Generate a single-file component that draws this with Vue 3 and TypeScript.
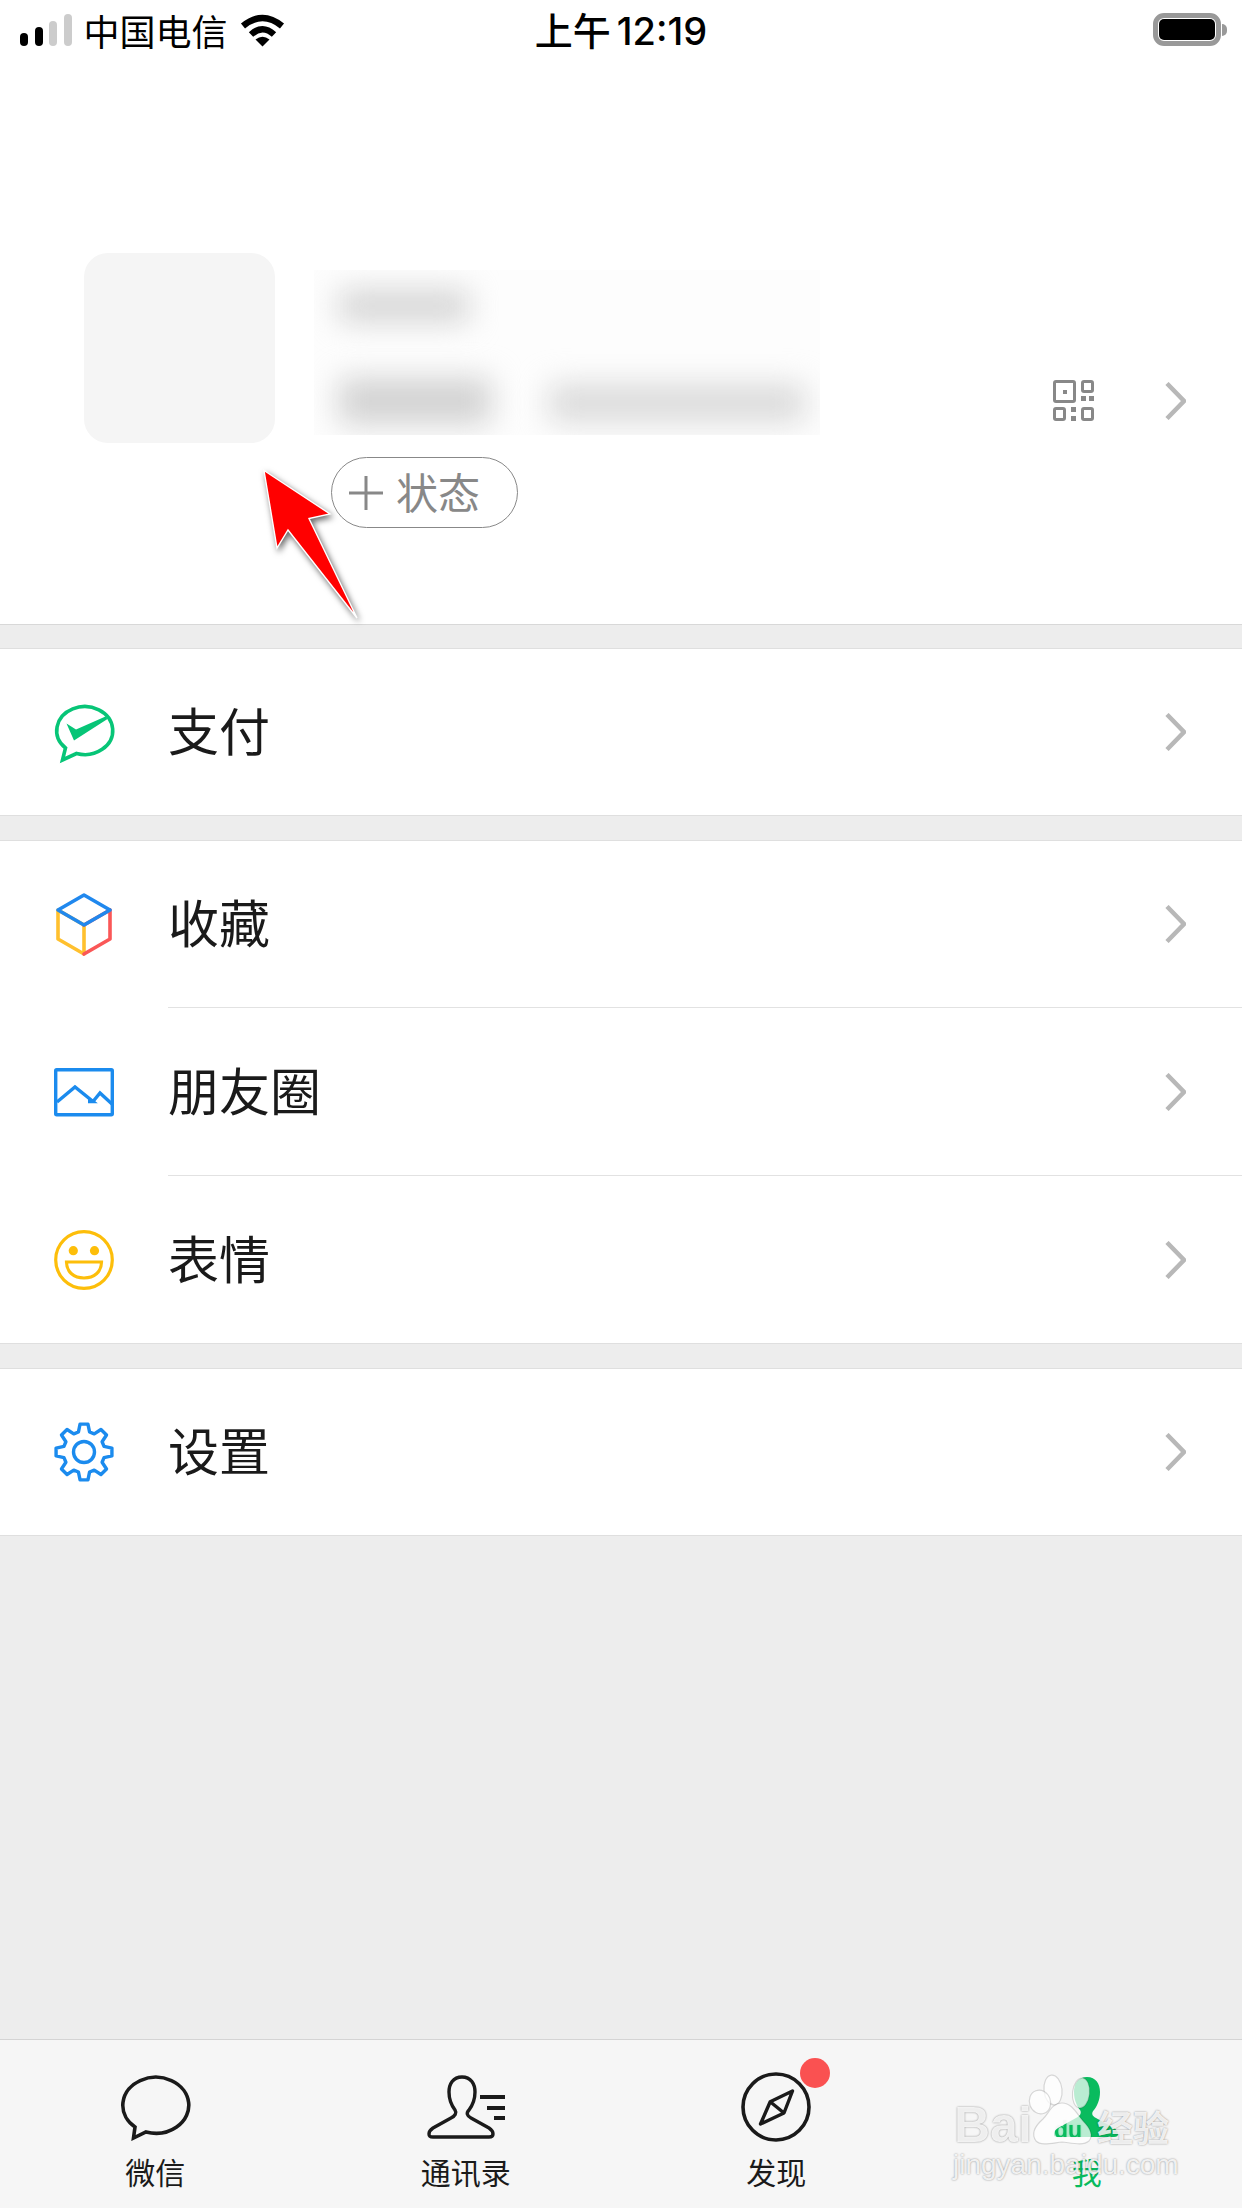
<script setup lang="ts">
interface Item { key: string; label: string; tall?: boolean }

const groups: Item[][] = [
  [{ key: 'pay', label: '支付' }],
  [
    { key: 'fav', label: '收藏' },
    { key: 'moments', label: '朋友圈', tall: true },
    { key: 'sticker', label: '表情', tall: true },
  ],
  [{ key: 'settings', label: '设置' }],
]

function gearPath(): string {
  const cx = 30
  const cy = 30
  const outer = 28.2
  const root = 20.8
  const parts: string[] = []
  for (let i = 0; i < 8; i++) {
    const a = (i * Math.PI) / 4 - Math.PI / 2
    const pts: [number, number][] = [
      [root, a - 0.27],
      [outer, a - 0.14],
      [outer, a + 0.14],
      [root, a + 0.27],
    ]
    for (const [r, t] of pts) {
      const x = cx + r * Math.cos(t)
      const y = cy + r * Math.sin(t)
      parts.push(`${parts.length ? 'L' : 'M'}${x.toFixed(2)} ${y.toFixed(2)}`)
    }
  }
  return parts.join(' ') + ' Z'
}
const gear = gearPath()

const personPath =
  'M36 2 C27 2 23 9 23 17 C23 25 26 31 29 35 C31 38 29 41 25 43 L7 53 C4 55 3 57 3 59 C3 62 5 62 7 62 L63 62 C66 62 67 61 67 59 C67 57 66 55 63 53 L45 43 C41 41 40 38 43 35 C46 31 49 25 49 17 C49 9 45 2 36 2 Z'
</script>

<template>
  <div class="phone">
    <div class="status">
      <div class="status-left">
        <div class="signal">
          <i class="b1"></i><i class="b2"></i><i class="b3"></i><i class="b4"></i>
        </div>
        <span class="carrier">中国电信</span>
        <svg class="wifi" width="46" height="34" viewBox="0 0 46 34">
          <path d="M3 13 Q22.5 -3 42 13" fill="none" stroke="#000" stroke-width="6.4" />
          <path d="M11 21.5 Q22.5 11 34 21.5" fill="none" stroke="#000" stroke-width="6.4" />
          <path d="M15.5 26.5 Q22.5 21 29.5 26.5 L22.5 33.5 Z" fill="#000" />
        </svg>
      </div>
      <span class="time">上午 12:19</span>
      <div class="status-right">
        <div class="battery"><div class="level"></div></div>
        <div class="nub"></div>
      </div>
    </div>

    <div class="profile">
      <div class="avatar"></div>
      <div class="info">
        <div class="blur-patch">
          <div class="blob blob-name"></div>
          <div class="blob-row">
            <div class="blob blob-a"></div>
            <div class="blob blob-b"></div>
          </div>
        </div>
        <div class="pill">
          <svg width="34" height="34" viewBox="0 0 34 34">
            <path d="M0 17 H34 M17 0 V34" stroke="#888" stroke-width="3" fill="none" />
          </svg>
          <span>状态</span>
        </div>
      </div>
      <div class="profile-right">
        <svg width="41" height="41" viewBox="0 0 41 41" fill="none" stroke="#888" stroke-width="3">
          <rect x="1.5" y="1.5" width="20" height="20" rx="1.5" />
          <rect x="10" y="10" width="4" height="4" fill="#888" stroke="none" />
          <rect x="29.5" y="1.5" width="10" height="10" rx="1.5" />
          <rect x="28" y="16" width="5" height="5" fill="#888" stroke="none" />
          <rect x="36" y="16" width="5" height="5" fill="#888" stroke="none" />
          <rect x="1.5" y="28.5" width="10" height="11" rx="1.5" />
          <rect x="18" y="27" width="5" height="5" fill="#888" stroke="none" />
          <rect x="18" y="36" width="5" height="5" fill="#888" stroke="none" />
          <rect x="29.5" y="28.5" width="10" height="11" rx="1.5" />
        </svg>
        <svg class="chev" width="21" height="38" viewBox="0 0 21 38">
          <path d="M2 1.5 L19 19 L2 36.5" fill="none" stroke="#b8b8b8" stroke-width="4.5" />
        </svg>
      </div>
    </div>

    <section v-for="(group, gi) in groups" :key="gi" class="group">
      <template v-for="(item, ii) in group" :key="item.key">
        <div v-if="ii > 0" class="divider"></div>
        <div class="row" :class="{ tall: item.tall }">
          <svg class="icon" width="60" height="60" viewBox="0 0 60 60" fill="none">
            <template v-if="item.key === 'pay'">
              <path d="M11.5 46 A28 24 0 1 1 22.5 51.5 L8.5 58 Z" stroke="#07c577" stroke-width="3.6" stroke-linejoin="miter" />
              <path d="M12.5 21.5 L22 27.5 L51.5 14.5 L53.5 17 L20 38.5 Z" fill="#07c577" />
            </template>
            <template v-else-if="item.key === 'fav'">
              <path d="M4 45 V16 L30 31 V60 L4 45 Z" stroke="#ffc02e" stroke-width="3.6" stroke-linejoin="round" />
              <path d="M30 31 L56 16 V45 L30 60" stroke="#fa5757" stroke-width="3.6" stroke-linejoin="round" stroke-linecap="round" />
              <path d="M30 1 L56 16 L30 31 L4 16 Z" stroke="#2088ee" stroke-width="3.6" stroke-linejoin="round" />
            </template>
            <template v-else-if="item.key === 'moments'">
              <rect x="1.7" y="7.7" width="56.6" height="45" rx="1" stroke="#1b8bee" stroke-width="3.4" />
              <path d="M3 40 L21 25 L39 39.5 H34 M39 39.5 L46 31 L58 42" stroke="#1b8bee" stroke-width="3.4" />
            </template>
            <template v-else-if="item.key === 'sticker'">
              <circle cx="30" cy="30" r="28.3" stroke="#fdbe0a" stroke-width="3.2" />
              <circle cx="19.3" cy="20.7" r="4.6" fill="#fdbe0a" />
              <circle cx="40.5" cy="20.7" r="4.6" fill="#fdbe0a" />
              <path d="M12.5 32 H47.5 C47.5 42 40 48 30 48 C20 48 12.5 42 12.5 32 Z" stroke="#fdbe0a" stroke-width="3.2" />
            </template>
            <template v-else>
              <path :d="gear" stroke="#1b8bee" stroke-width="3.4" stroke-linejoin="round" />
              <circle cx="30" cy="30" r="10.5" stroke="#1b8bee" stroke-width="3.4" />
            </template>
          </svg>
          <span class="label">{{ item.label }}</span>
          <svg class="chev" width="21" height="38" viewBox="0 0 21 38">
            <path d="M2 1.5 L19 19 L2 36.5" fill="none" stroke="#b8b8b8" stroke-width="4.5" />
          </svg>
        </div>
      </template>
    </section>

    <div class="spacer"></div>

    <nav class="tabs">
      <div class="tab">
        <div class="tab-icon">
          <svg width="80" height="66" viewBox="0 0 80 66" fill="none">
            <path d="M20 52 A33 28 0 1 1 31 57 L18.5 63 Z" stroke="#1a1a1a" stroke-width="3.6" />
          </svg>
        </div>
        <span>微信</span>
      </div>
      <div class="tab">
        <div class="tab-icon">
          <svg width="80" height="66" viewBox="0 0 80 66" fill="none">
            <path :d="personPath" stroke="#1a1a1a" stroke-width="3.4" />
            <path d="M54 22 H79 M61 33 H79 M68 43 H79" stroke="#1a1a1a" stroke-width="4" />
          </svg>
        </div>
        <span>通讯录</span>
      </div>
      <div class="tab">
        <div class="tab-icon">
          <svg class="over" width="80" height="66" viewBox="0 8 80 66" fill="none">
            <circle cx="40" cy="40" r="33" stroke="#1a1a1a" stroke-width="3.6" />
            <path d="M56.5 24 L48 46 L24.5 57 L34.2 34.7 Z M34.2 34.7 L48 46" stroke="#1a1a1a" stroke-width="3.4" stroke-linejoin="round" />
          </svg>
          <div class="badge"></div>
        </div>
        <span>发现</span>
      </div>
      <div class="tab active">
        <div class="tab-icon">
          <svg width="80" height="66" viewBox="-4 0 80 66">
            <path :d="personPath" fill="#09bb5e" />
          </svg>
        </div>
        <span>我</span>
      </div>
    </nav>

    <svg class="arrow" width="120" height="170" viewBox="0 0 120 170">
      <path d="M14 10.5 L80 54 L59 58.5 L107 158 L38 70 L27 88 Z" fill="#ff0000" stroke="#fff" stroke-width="1.4" />
    </svg>

    <div class="watermark">
      <svg class="paw" width="260" height="148" viewBox="0 0 260 148">
        <defs>
          <mask id="du-cut">
            <rect width="260" height="148" fill="#fff" />
            <text x="114" y="78" font-family="Liberation Sans, sans-serif" font-weight="700" font-size="23" fill="#000">du</text>
          </mask>
        </defs>
        <g fill="#fff" fill-opacity="0.72" stroke="#000" stroke-opacity="0.14" stroke-width="1.2">
          <ellipse cx="113" cy="30" rx="9" ry="15" transform="rotate(-6 113 30)" />
          <ellipse cx="141" cy="33" rx="8.5" ry="15" transform="rotate(6 141 33)" />
          <ellipse cx="100" cy="42" rx="10.5" ry="12" transform="rotate(-20 100 42)" />
          <path d="M122 43 C132 43 137 54 143 61 C151 69 153 76 149 81 C143 86 132 83 122 82 C112 83 101 86 96 81 C91 74 95 66 103 59 C109 53 112 43 122 43 Z" mask="url(#du-cut)" />
        </g>
      </svg>
      <span class="wm-bai">Bai</span>
      <span class="wm-jy">经验</span>
      <span class="wm-url">jingyan.baidu.com</span>
    </div>
  </div>
</template>

<style>
html,
body {
  margin: 0;
  background: #ededed;
}
</style>

<style scoped>
.phone {
  position: relative;
  width: 1242px;
  height: 2208px;
  display: flex;
  flex-direction: column;
  background: #ededed;
  overflow: hidden;
  font-family: "Noto Sans CJK SC", "Liberation Sans", sans-serif;
  color: #1a1a1a;
}
.status {
  height: 60px;
  background: #fff;
  display: grid;
  grid-template-columns: 1fr auto 1fr;
  align-items: center;
  color: #000;
  flex: none;
}
.status-left {
  display: flex;
  align-items: center;
  padding-left: 20px;
}
.signal {
  display: flex;
  align-items: flex-end;
  gap: 6.5px;
  height: 32px;
  margin-top: -1px;
}
.signal i {
  display: block;
  width: 8px;
  border-radius: 4px;
  background: #000;
}
.signal .b1 { height: 13px; }
.signal .b2 { height: 19px; }
.signal .b3 { height: 25px; background: #ccc; }
.signal .b4 { height: 32px; background: #ccc; }
.carrier {
  font-size: 36px;
  line-height: 40px;
  margin-left: 12px;
}
.wifi {
  margin-left: 12px;
  margin-top: -1px;
}
.time {
  font-family: "Inter", "Noto Sans CJK SC", sans-serif;
  font-size: 38px;
  line-height: 40px;
  font-weight: 500;
  word-spacing: -4px;
  position: relative;
  top: 1px;
}
.status-right {
  display: flex;
  align-items: center;
  justify-content: flex-end;
  padding-right: 15px;
}
.battery {
  box-sizing: border-box;
  width: 68px;
  height: 33px;
  border: 5px solid #999;
  border-radius: 11px;
  padding: 1px;
  margin-top: -1px;
}
.level {
  width: 100%;
  height: 100%;
  background: #000;
  border-radius: 5px;
}
.nub {
  width: 5px;
  height: 12px;
  margin-left: 1px;
  background: #999;
  border-radius: 0 5px 5px 0;
}
.profile {
  box-sizing: border-box;
  height: 565px;
  flex: none;
  background: #fff;
  border-bottom: 1px solid #d8d8d8;
  padding: 193px 56px 0 84px;
  display: flex;
  align-items: flex-start;
}
.avatar {
  width: 191px;
  height: 190px;
  border-radius: 24px;
  background: #f5f5f5;
  flex: none;
}
.info {
  margin-left: 39px;
  margin-top: 17px;
}
.blur-patch {
  box-sizing: border-box;
  width: 506px;
  height: 165px;
  background: #fdfdfd;
  overflow: hidden;
  padding: 20px 0 0 25px;
}
.blob {
  background: #d4d4d4;
  filter: blur(15px);
}
.blob-name {
  width: 130px;
  height: 32px;
}
.blob-row {
  display: flex;
  margin-top: 56px;
  gap: 58px;
}
.blob-a {
  width: 152px;
  height: 46px;
  background: #d2d2d2;
}
.blob-b {
  width: 256px;
  height: 38px;
  margin-top: 6px;
  background: #dadada;
}
.pill {
  box-sizing: border-box;
  width: 187px;
  height: 71px;
  margin: 22px 0 0 17px;
  border: 1.5px solid #888;
  border-radius: 36px;
  display: flex;
  align-items: center;
  padding-left: 17px;
  gap: 13px;
  color: #888;
  font-size: 42px;
}
.pill span {
  line-height: 50px;
  margin-top: -4px;
}
.profile-right {
  margin-left: auto;
  margin-top: 127px;
  display: flex;
  align-items: center;
  gap: 71px;
}
.group {
  flex: none;
  margin-top: 24px;
  background: #fff;
  border-top: 1px solid #dfdfdf;
  border-bottom: 1px solid #dfdfdf;
}
.group:first-of-type {
  margin-top: 23px;
}
.row {
  height: 166px;
  display: flex;
  align-items: center;
  padding: 0 56px 0 54px;
}
.row.tall {
  height: 167px;
}
.divider {
  height: 1px;
  margin-left: 168px;
  background: #e2e2e2;
}
.icon {
  flex: none;
  overflow: visible;
}
.label {
  margin-left: 54px;
  margin-top: -6px;
  font-size: 51px;
  line-height: 70px;
}
.chev {
  flex: none;
}
.row .chev {
  margin-left: auto;
}
.spacer {
  flex: 1;
}
.tabs {
  flex: none;
  box-sizing: border-box;
  height: 169px;
  background: #f6f6f6;
  border-top: 1px solid #d4d4d4;
  display: grid;
  grid-template-columns: repeat(4, 1fr);
  padding-top: 35px;
}
.tab {
  display: flex;
  flex-direction: column;
  align-items: center;
  font-size: 30px;
  line-height: 36px;
  color: #1a1a1a;
}
.tab span {
  margin-top: 12px;
}
.tab.active {
  color: #09bb5e;
}
.tab-icon {
  position: relative;
  width: 80px;
  height: 66px;
}
.tab-icon svg {
  display: block;
}
.tab-icon .over {
  overflow: visible;
}
.badge {
  position: absolute;
  left: 64px;
  top: -17px;
  width: 30px;
  height: 30px;
  border-radius: 50%;
  background: #fa5151;
}
.arrow {
  position: absolute;
  left: 250px;
  top: 460px;
  filter: drop-shadow(2px 3px 3px rgba(0, 0, 0, 0.6));
}
.watermark {
  position: absolute;
  left: 940px;
  top: 2060px;
  width: 260px;
  height: 148px;
  font-family: "Liberation Sans", "Noto Sans CJK SC", sans-serif;
  color: rgba(255, 255, 255, 0.86);
  text-shadow: 0 0 2px rgba(0, 0, 0, 0.45);
}
.paw {
  position: absolute;
  left: 0;
  top: 0;
}
.wm-bai,
.wm-jy,
.wm-url {
  position: absolute;
  white-space: nowrap;
}
.wm-bai {
  left: 14px;
  top: 36px;
  font-size: 50px;
  line-height: 58px;
  font-weight: 700;
}
.wm-jy {
  left: 157px;
  top: 40px;
  font-size: 36px;
  line-height: 52px;
  font-weight: 700;
  font-family: "Noto Sans CJK SC", sans-serif;
}
.wm-url {
  left: 13px;
  top: 88px;
  font-size: 28px;
  line-height: 34px;
}
</style>
